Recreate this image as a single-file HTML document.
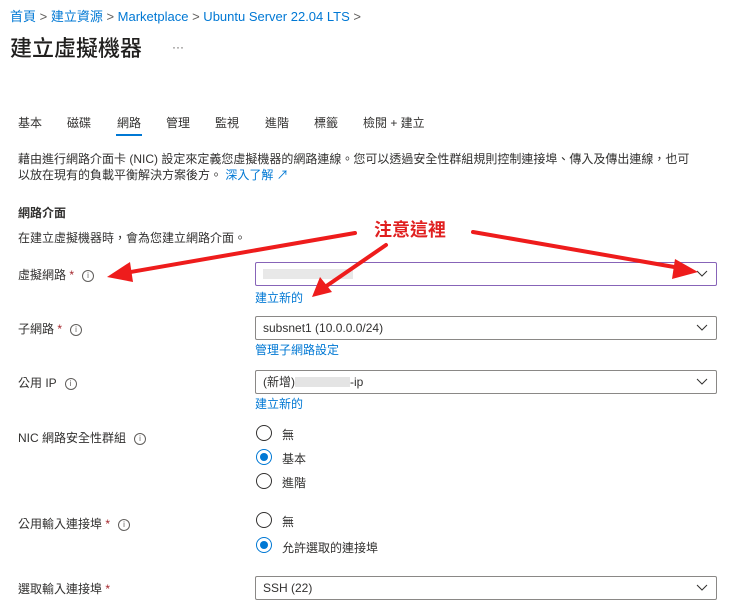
<!DOCTYPE html>
<html><head><meta charset="utf-8"><style>
body{margin:0;width:740px;height:612px;background:#fff;font-family:"Liberation Sans","Noto Sans CJK TC",sans-serif;color:#323130;position:relative;overflow:hidden}
.a{position:absolute;white-space:nowrap}
.l{color:#0078d4}
.f{font-size:12px}
.box{position:absolute;left:255px;width:453px;height:22px;border:1px solid #8a8886;border-radius:2px;font-size:12px;line-height:22px;padding-left:7px;box-sizing:content-box}
.chev{position:absolute;right:8px;top:7px}
.rad{position:absolute;left:256px;width:14px;height:14px;border:1px solid #323130;border-radius:50%}
.rad.on::after{content:"";position:absolute;left:3px;top:3px;width:8px;height:8px;border-radius:50%;background:#0078d4}
.rad.on{border-color:#0078d4}
.i{display:inline-block;width:10px;height:10px;border:1px solid #605e5c;border-radius:50%;font-size:8px;line-height:10px;text-align:center;margin-left:8px;vertical-align:1px;color:#605e5c}
.req{color:#a4262c}
</style></head><body>
<div class="a l" style="left:10px;top:6px;font-size:13px">首頁 <span style="color:#605e5c">&gt;</span> 建立資源 <span style="color:#605e5c">&gt;</span> Marketplace <span style="color:#605e5c">&gt;</span> Ubuntu Server 22.04 LTS <span style="color:#605e5c">&gt;</span></div>
<div class="a" style="left:10px;top:31px;font-size:22px;font-weight:500;color:#201f1e">建立虛擬機器</div>
<div class="a" style="left:172px;top:40px;font-size:12px;color:#605e5c">···</div>
<div class="a f" style="top:114px;left:18px">基本</div>
<div class="a f" style="top:114px;left:67px">磁碟</div>
<div class="a f" style="top:114px;left:117px">網路</div>
<div class="a" style="top:134px;left:116px;width:26px;height:2px;background:#0078d4"></div>
<div class="a f" style="top:114px;left:166px">管理</div>
<div class="a f" style="top:114px;left:215px">監視</div>
<div class="a f" style="top:114px;left:265px">進階</div>
<div class="a f" style="top:114px;left:314px">標籤</div>
<div class="a f" style="top:114px;left:363px">檢閱 + 建立</div>
<div class="a f" style="top:150px;left:18px">藉由進行網路介面卡 (NIC) 設定來定義您虛擬機器的網路連線。您可以透過安全性群組規則控制連接埠、傳入及傳出連線，也可</div>
<div class="a f" style="top:166px;left:18px">以放在現有的負載平衡解決方案後方。 <span class="l">深入了解 ↗</span></div>
<div class="a f" style="top:204px;left:18px;font-weight:600">網路介面</div>
<div class="a f" style="top:229px;left:18px">在建立虛擬機器時，會為您建立網路介面。</div>

<div class="a f" style="top:266px;left:18px">虛擬網路 <span class="req">*</span><span class="i">i</span></div>
<div class="box" style="top:262px;border-color:#8764b8"><span style="display:inline-block;width:90px;height:10px;background:#e8e8e8;vertical-align:-1px"></span><svg class="chev" width="12" height="8"><path d="M1 1l5 5 5-5" fill="none" stroke="#323130"/></svg></div>
<div class="a f l" style="top:289px;left:255px">建立新的</div>

<div class="a f" style="top:320px;left:18px">子網路 <span class="req">*</span><span class="i">i</span></div>
<div class="box" style="top:316px">subsnet1 (10.0.0.0/24)<svg class="chev" width="12" height="8"><path d="M1 1l5 5 5-5" fill="none" stroke="#323130"/></svg></div>
<div class="a f l" style="top:341px;left:255px">管理子網路設定</div>

<div class="a f" style="top:374px;left:18px">公用 IP<span class="i">i</span></div>
<div class="box" style="top:370px">(新增)<span style="display:inline-block;width:55px;height:10px;background:#e4e4e4;vertical-align:-1px"></span>-ip<svg class="chev" width="12" height="8"><path d="M1 1l5 5 5-5" fill="none" stroke="#323130"/></svg></div>
<div class="a f l" style="top:395px;left:255px">建立新的</div>

<div class="a f" style="top:429px;left:18px">NIC 網路安全性群組<span class="i">i</span></div>
<div class="rad" style="top:425px"></div><div class="a f" style="top:426px;left:282px">無</div>
<div class="rad on" style="top:449px"></div><div class="a f" style="top:450px;left:282px">基本</div>
<div class="rad" style="top:473px"></div><div class="a f" style="top:474px;left:282px">進階</div>

<div class="a f" style="top:515px;left:18px">公用輸入連接埠 <span class="req">*</span><span class="i">i</span></div>
<div class="rad" style="top:512px"></div><div class="a f" style="top:513px;left:282px">無</div>
<div class="rad on" style="top:537px"></div><div class="a f" style="top:539px;left:282px">允許選取的連接埠</div>

<div class="a f" style="top:580px;left:18px">選取輸入連接埠 <span class="req">*</span></div>
<div class="box" style="top:576px">SSH (22)<svg class="chev" width="12" height="8"><path d="M1 1l5 5 5-5" fill="none" stroke="#323130"/></svg></div>

<div class="a" style="left:374px;top:216px;font-size:18px;font-weight:bold;color:#e02020">注意這裡</div>
<svg class="a" style="left:0;top:0" width="740" height="612">
<g stroke="#ee1c1c" stroke-width="4" stroke-linecap="round" fill="#ee1c1c">
<line x1="355" y1="233" x2="125" y2="273"/>
<line x1="386" y1="245" x2="325" y2="287"/>
<line x1="473" y1="232" x2="680" y2="268"/>
</g>
<g fill="#ee1c1c">
<polygon points="107,277 130,262 133,282"/>
<polygon points="312,297 320,277 332,292"/>
<polygon points="698,272 675,259 672,279"/>
</g>
</svg>
</body></html>
